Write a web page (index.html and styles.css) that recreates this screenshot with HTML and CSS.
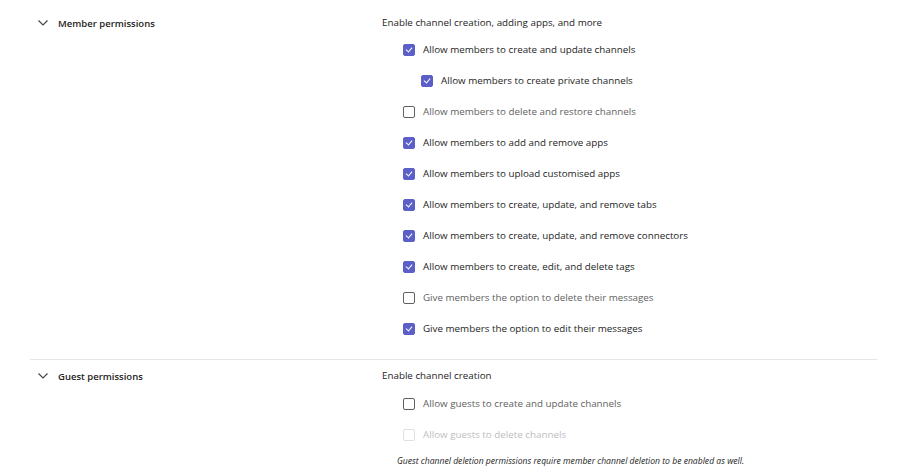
FILE: index.html
```html
<!DOCTYPE html>
<html>
<head>
<meta charset="utf-8">
<link rel="stylesheet" href="styles.css">
</head>
<body>
<div class="page">
  <section class="section section-first">
    <div class="head">
      <svg class="chev" viewBox="0 0 10 6" width="10" height="6"><path d="M0.5 0.5 L5 5 L9.5 0.5" fill="none" stroke="#424242" stroke-width="1.1"/></svg>
      <span class="title">Member permissions</span>
    </div>
    <div class="body">
      <div class="desc">Enable channel creation, adding apps, and more</div>
      <ul class="list">
        <li class="row on"><span class="box"></span><span class="lbl">Allow members to create and update channels</span></li>
        <li class="row on nested"><span class="box"></span><span class="lbl">Allow members to create private channels</span></li>
        <li class="row"><span class="box"></span><span class="lbl">Allow members to delete and restore channels</span></li>
        <li class="row on"><span class="box"></span><span class="lbl">Allow members to add and remove apps</span></li>
        <li class="row on"><span class="box"></span><span class="lbl">Allow members to upload customised apps</span></li>
        <li class="row on"><span class="box"></span><span class="lbl">Allow members to create, update, and remove tabs</span></li>
        <li class="row on"><span class="box"></span><span class="lbl">Allow members to create, update, and remove connectors</span></li>
        <li class="row on"><span class="box"></span><span class="lbl">Allow members to create, edit, and delete tags</span></li>
        <li class="row"><span class="box"></span><span class="lbl">Give members the option to delete their messages</span></li>
        <li class="row on"><span class="box"></span><span class="lbl">Give members the option to edit their messages</span></li>
      </ul>
    </div>
  </section>
  <section class="section">
    <div class="head">
      <svg class="chev" viewBox="0 0 10 6" width="10" height="6"><path d="M0.5 0.5 L5 5 L9.5 0.5" fill="none" stroke="#424242" stroke-width="1.1"/></svg>
      <span class="title">Guest permissions</span>
    </div>
    <div class="body">
      <div class="desc">Enable channel creation</div>
      <ul class="list">
        <li class="row"><span class="box"></span><span class="lbl">Allow guests to create and update channels</span></li>
        <li class="row disabled"><span class="box"></span><span class="lbl">Allow guests to delete channels</span></li>
      </ul>
      <div class="note">Guest channel deletion permissions require member channel deletion to be enabled as well.</div>
    </div>
  </section>
</div>
</body>
</html>
```
FILE: styles.css
```css
html, body {
  margin: 0;
  padding: 0;
  background: #ffffff;
}
body {
  font-family: "Open Sans", "Noto Sans", sans-serif;
  font-size: 9.8px;
  color: #242424;
  width: 902px;
  height: 475px;
  overflow: hidden;
}
.page {
  padding: 0 25px 0 30px;
}
.section {
  display: grid;
  grid-template-columns: 344px 1fr;
  padding: 6px 0 0 8px;
}
.section-first {
  padding-top: 13px;
  padding-bottom: 15px;
  border-bottom: 1px solid #e6e6e6;
}
.section-first .desc {
  margin-bottom: 1px;
}
.head {
  display: flex;
  align-items: center;
  height: 20px;
  gap: 10px;
}
.chev {
  display: block;
}
.title {
  font-weight: 600;
  font-size: 9.5px;
  color: #242424;
}
.desc {
  height: 20px;
  line-height: 20px;
  margin-bottom: 2px;
  font-size: 9.8px;
}
.list {
  list-style: none;
  margin: 0;
  padding: 0 0 0 21px;
}
.row {
  display: flex;
  align-items: center;
  height: 31px;
  gap: 8px;
  color: #616161;
}
.row.nested {
  padding-left: 18px;
}
.box {
  width: 10px;
  height: 10px;
  border: 1px solid #616161;
  border-radius: 2px;
  box-sizing: content-box;
  flex: none;
  position: relative;
}
.row.on {
  color: #242424;
}
.row.on .box {
  background: #5b5fc7;
  border-color: #5b5fc7;
}
.row.on .box::after {
  content: "";
  position: absolute;
  left: 3px;
  top: 1px;
  width: 3px;
  height: 5px;
  border: solid #ffffff;
  border-width: 0 1.2px 1.2px 0;
  transform: rotate(40deg);
}
.row.disabled {
  color: #bdbdbd;
}
.row.disabled .box {
  border-color: #e0e0e0;
}
.note {
  margin-top: 4px;
  padding-left: 15px;
  font-style: italic;
  font-size: 8.6px;
  line-height: 14px;
  color: #242424;
}
```
